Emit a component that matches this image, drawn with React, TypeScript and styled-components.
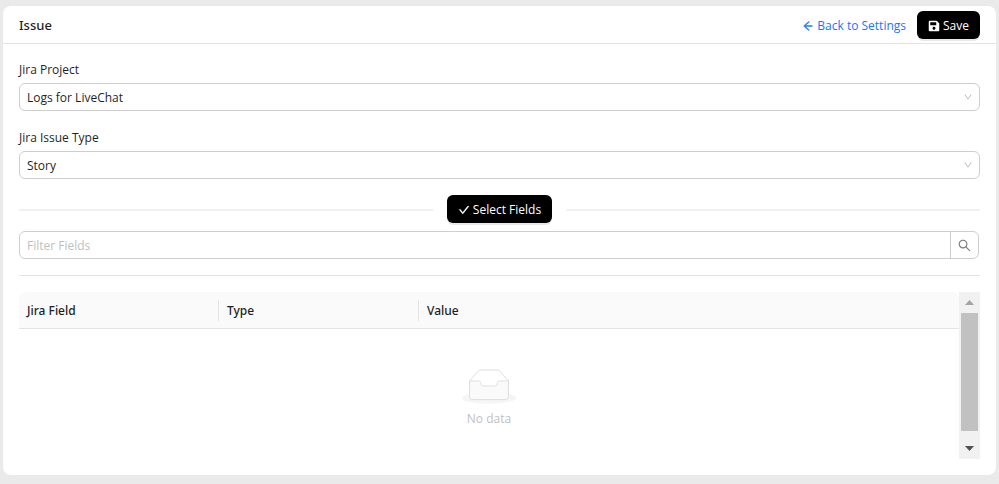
import React from "react";
import styled, { createGlobalStyle } from "styled-components";
import { AiOutlineArrowLeft, AiOutlineCheck, AiOutlineDown, AiOutlineSearch } from "react-icons/ai";
import { FaSave } from "react-icons/fa";

const GlobalStyle = createGlobalStyle`
  *, *::before, *::after { box-sizing: border-box; }
  body {
    margin: 0;
    background: #eaeaea;
    color: #1f1f1f;
    font-family: "Segoe UI", "Open Sans", sans-serif;
    font-size: 12px;
    line-height: 20px;
  }
  button, input, select { font: inherit; color: inherit; }
`;

const Page = styled.main`
  padding: 6px 3px 9px;
`;

const Card = styled.section`
  background: #fff;
  border-radius: 8px;
`;

const CardHeader = styled.header`
  display: flex;
  align-items: center;
  height: 38px;
  padding: 0 16px;
  border-bottom: 1px solid #e4e4e4;
`;

const Title = styled.h1`
  flex: 1;
  margin: 0;
  font-family: "Segoe UI", "Noto Sans", sans-serif;
  font-size: 13px;
  font-weight: 500;
`;

const BackLink = styled.a`
  display: flex;
  align-items: center;
  gap: 3px;
  margin-right: 11px;
  padding-top: 2px;
  color: #1677ff;
  text-decoration: none;

  & > svg { stroke: currentColor; stroke-width: 40px; }
`;

const PrimaryButton = styled.button`
  display: flex;
  align-items: center;
  justify-content: center;
  gap: 3px;
  height: 28px;
  padding: 2px 11px 0;
  border: 0;
  border-radius: 6px;
  background: #000;
  color: #fff;
  box-shadow: 0 2px 0 #e9e9e9;
  white-space: nowrap;
`;

const CheckIcon = styled(AiOutlineCheck)`
  stroke: currentColor;
  stroke-width: 40px;
`;

const CardBody = styled.div`
  padding: 16px;
`;

const Field = styled.div`
  display: flex;
  flex-direction: column;
  gap: 3px;
  margin-bottom: 17px;

  & + & { margin-bottom: 16px; }
`;

const SelectBox = styled.div`
  display: grid;
  align-items: center;

  & > * { grid-area: 1 / 1; }
  & > svg {
    justify-self: end;
    margin-right: 7px;
    color: #b0b0b0;
    pointer-events: none;
  }
`;

const Select = styled.select`
  appearance: none;
  width: 100%;
  height: 28px;
  padding: 1px 24px 0 7px;
  border: 1px solid #cecece;
  border-radius: 6px;
  background: #fff;
`;

const ButtonDivider = styled.div`
  display: flex;
  align-items: center;
  gap: 14px;
  margin-bottom: 8px;

  &::before, &::after {
    content: "";
    flex: 1;
    height: 2px;
    margin-top: 2px;
    background: #f1f1f1;
  }
`;

const SearchForm = styled.form`
  display: flex;
  height: 28px;
  margin-right: 1px;
  border: 1px solid #cecece;
  border-radius: 6px;
`;

const SearchInput = styled.input`
  flex: 1;
  min-width: 0;
  padding: 1px 7px 0;
  border: 0;
  background: transparent;

  &::placeholder { color: #bfbfbf; opacity: 1; }
`;

const SearchButton = styled.button`
  display: grid;
  place-items: center;
  width: 28px;
  padding: 0;
  border: 0;
  border-left: 1px solid #cecece;
  background: transparent;
  color: #7c7c7c;
`;

const Rule = styled.hr`
  height: 1px;
  margin: 16px 0;
  border: 0;
  background: #e4e4e4;
`;

const TableArea = styled.div`
  display: flex;
  min-height: 167px;
`;

const Table = styled.table`
  flex: 1;
  align-self: flex-start;
  border-collapse: separate;
  border-spacing: 0;
  table-layout: fixed;
`;

const HeadCell = styled.th<{ $divided?: boolean }>`
  width: ${(p) => (p.$divided ? "200px" : "auto")};
  height: 37px;
  padding: 0;
  border-bottom: 1px solid #e4e4e4;
  background: #fafafa;
  text-align: left;
  font-family: "Segoe UI", "Noto Sans", sans-serif;
  font-weight: 500;

  &:first-child { border-top-left-radius: 8px; }
  &:last-child { border-top-right-radius: 8px; }

  & > span {
    display: block;
    padding: 1px 8px 0;
    border-right: ${(p) => (p.$divided ? "1px solid #e4e4e4" : "0")};
  }
`;

const EmptyCell = styled.td`
  padding: 40px 0 8px;
  color: #bfbfbf;
  text-align: center;

  & > svg { display: block; margin: 0 auto 5px; }
`;

const ScrollTrack = styled.div`
  display: flex;
  flex-direction: column;
  align-items: center;
  width: 21px;
  background: #f1f1f1;
`;

const ScrollArrow = styled.button<{ $enabled?: boolean }>`
  display: grid;
  place-items: center;
  width: 100%;
  height: 21px;
  padding: 0;
  border: 0;
  background: transparent;
  color: ${(p) => (p.$enabled ? "#505050" : "#a3a3a3")};
`;

const ScrollThumb = styled.div`
  width: 17px;
  height: 118px;
  margin-bottom: auto;
  background: #c1c1c1;
`;

function EmptyBox() {
  return (
    <svg width="54" height="35" viewBox="0 0 64 41" aria-hidden="true">
      <g transform="translate(0 1)" fill="none" fillRule="evenodd">
        <ellipse fill="#f5f5f5" cx="32" cy="33" rx="32" ry="7" />
        <g fillRule="nonzero" stroke="#d9d9d9">
          <path d="M55 12.76L44.854 1.258C44.367.474 43.656 0 42.907 0H21.093c-.749 0-1.46.474-1.947 1.257L9 12.761V22h46v-9.24z" />
          <path
            d="M41.613 15.931c0-1.605.994-2.93 2.227-2.931H55v18.137C55 33.26 53.68 35 52.05 35h-40.1C10.32 35 9 33.259 9 31.137V13h11.16c1.233 0 2.227 1.323 2.227 2.928v.022c0 1.605 1.005 2.901 2.237 2.901h14.752c1.232 0 2.237-1.308 2.237-2.913v-.007z"
            fill="#fafafa"
          />
        </g>
      </g>
    </svg>
  );
}

export default function App() {
  return (
    <>
      <GlobalStyle />
      <Page>
        <Card>
          <CardHeader>
            <Title>Issue</Title>
            <BackLink href="#settings">
              <AiOutlineArrowLeft size={12} />
              Back to Settings
            </BackLink>
            <PrimaryButton type="button">
              <FaSave size={12} />
              Save
            </PrimaryButton>
          </CardHeader>
          <CardBody>
            <Field>
              <label htmlFor="project">Jira Project</label>
              <SelectBox>
                <Select id="project">
                  <option>Logs for LiveChat</option>
                </Select>
                <AiOutlineDown size={10} />
              </SelectBox>
            </Field>
            <Field>
              <label htmlFor="issue-type">Jira Issue Type</label>
              <SelectBox>
                <Select id="issue-type">
                  <option>Story</option>
                </Select>
                <AiOutlineDown size={10} />
              </SelectBox>
            </Field>
            <ButtonDivider>
              <PrimaryButton type="button">
                <CheckIcon size={12} />
                Select Fields
              </PrimaryButton>
            </ButtonDivider>
            <SearchForm role="search" onSubmit={(e) => e.preventDefault()}>
              <SearchInput type="text" placeholder="Filter Fields" aria-label="Filter Fields" />
              <SearchButton type="submit" aria-label="Search">
                <AiOutlineSearch size={15} />
              </SearchButton>
            </SearchForm>
            <Rule />
            <TableArea>
              <Table>
                <thead>
                  <tr>
                    <HeadCell $divided><span>Jira Field</span></HeadCell>
                    <HeadCell $divided><span>Type</span></HeadCell>
                    <HeadCell><span>Value</span></HeadCell>
                  </tr>
                </thead>
                <tbody>
                  <tr>
                    <EmptyCell colSpan={3}>
                      <EmptyBox />
                      No data
                    </EmptyCell>
                  </tr>
                </tbody>
              </Table>
              <ScrollTrack>
                <ScrollArrow type="button" aria-label="Scroll up">
                  <svg width="9" height="5" viewBox="0 0 9 5"><path d="M0 5L4.500 0L9 5z" fill="currentColor" /></svg>
                </ScrollArrow>
                <ScrollThumb />
                <ScrollArrow type="button" aria-label="Scroll down" $enabled>
                  <svg width="9" height="5" viewBox="0 0 9 5"><path d="M0 0L4.500 5L9 0z" fill="currentColor" /></svg>
                </ScrollArrow>
              </ScrollTrack>
            </TableArea>
          </CardBody>
        </Card>
      </Page>
    </>
  );
}
